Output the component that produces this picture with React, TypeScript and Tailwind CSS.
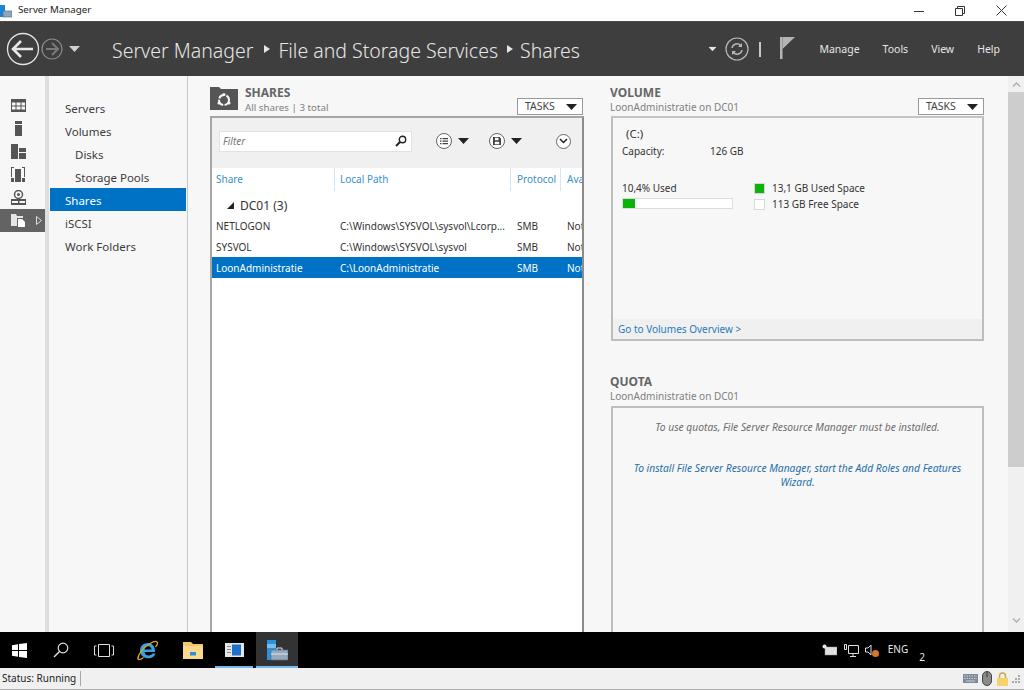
import React from "react";

const font = "font-['Noto_Sans','Open_Sans',sans-serif]";

function Caret({ className = "" }: { className?: string }) {
  return (
    <svg width="11" height="6" viewBox="0 0 11 6" className={className}>
      <path d="M0 0h11L5.500 6z" fill="currentColor" />
    </svg>
  );
}

function TitleBar() {
  return (
    <div className="flex h-[22px] items-center bg-white border-b border-[#4a4a4a]">
      <svg width="14" height="14" viewBox="0 0 14 14" className="-ml-[2px]">
        <rect x="1" y="1" width="6" height="12" fill="#1b86d6" />
        <rect x="5" y="7" width="9" height="6" fill="#8fa5bd" stroke="#4e6780" strokeWidth="0.6" />
      </svg>
      <span className="ml-[6px] text-[9.75px] text-[#222]">Server Manager</span>
      <div className="ml-auto flex items-center gap-[31px] pr-[17px] text-[#333]">
        <svg width="10" height="10" viewBox="0 0 10 10"><path d="M0 5.500h10" stroke="currentColor" /></svg>
        <svg width="10" height="10" viewBox="0 0 10 10" fill="none" stroke="currentColor"><path d="M.5 2.500h7v7h-7zM2.500 2.500v-2h7v7h-2" /></svg>
        <svg width="11" height="11" viewBox="0 0 11 11" stroke="currentColor"><path d="M.5.500l10 10M10.500.500l-10 10" /></svg>
      </div>
    </div>
  );
}

function Header() {
  return (
    <div className="flex h-[54px] items-center bg-[#3e3e3e] text-[#e6e6e6]">
      <svg width="34" height="34" viewBox="0 0 34 34" fill="none" className="ml-[6px]">
        <circle cx="17" cy="17" r="15.500" stroke="#e4e4e4" strokeWidth="1.300" />
        <path d="M7 17h20M15 9l-8 8 8 8" stroke="#e8e8e8" strokeWidth="2.600" />
      </svg>
      <svg width="22" height="22" viewBox="0 0 22 22" fill="none" className="ml-[1px]">
        <circle cx="11" cy="11" r="10" stroke="#8a8a8a" strokeWidth="1.200" />
        <path d="M17 11H5M11 5l6 6-6 6" stroke="#7a7a7a" strokeWidth="2" />
      </svg>
      <Caret className="ml-[6px] text-[#d0d0d0]" />
      <span className="ml-[32px] pt-[3px] text-[19.5px] font-light">Server Manager</span>
      <svg width="6" height="8" viewBox="0 0 6 8" className="ml-[11px] mr-[8px]"><path d="M0 0l6 4-6 4z" fill="#e6e6e6" /></svg>
      <span className="pt-[3px] text-[19.5px] font-light">File and Storage Services</span>
      <svg width="6" height="8" viewBox="0 0 6 8" className="ml-[9px] mr-[7px]"><path d="M0 0l6 4-6 4z" fill="#e6e6e6" /></svg>
      <span className="pt-[3px] text-[19.5px] font-light">Shares</span>
      <div className="ml-auto flex items-center">
        <Caret className="scale-75 text-[#e6e6e6]" />
        <svg width="24" height="24" viewBox="0 0 24 24" fill="none" className="ml-[7px]" stroke="#b8b8b8">
          <circle cx="12" cy="12" r="11" strokeWidth="1.200" />
          <path d="M7 11a5 5 0 0 1 8.700-2.500M17 13a5 5 0 0 1-8.700 2.500" strokeWidth="1.500" />
          <path d="M17 6v4h-4zM7 18v-4h4z" fill="#b8b8b8" stroke="none" />
        </svg>
        <div className="ml-[10px] h-[15px] w-[2px] bg-[#c8c8c8]" />
        <svg width="16" height="22" viewBox="0 0 16 22" className="ml-[19px] -mt-[3px]">
          <rect x="0" y="0" width="2.500" height="22" fill="#b4b4b4" />
          <path d="M2.500 0H15L2.500 12z" fill="#b4b4b4" />
        </svg>
        <div className="ml-[23px] mr-[24px] flex items-center gap-[23px] pt-[1px] text-[10.5px]">
          <span>Manage</span>
          <span>Tools</span>
          <span>View</span>
          <span>Help</span>
        </div>
      </div>
    </div>
  );
}

const railIcon = "#555";

function Rail() {
  return (
    <div className="flex w-[45px] shrink-0 flex-col pt-[18px]">
      {[
        <svg width="15" height="13" viewBox="0 0 15 13" fill={railIcon} key="a">
          <path d="M0 0h15v13H0zM1 3.500v3h3.500v-3zM5.500 3.500v3H9.500v-3zM10.500 3.500v3H14v-3zM1 7.500v3h3.500v-3zM5.500 7.500v3H9.500v-3zM10.500 7.500v3H14v-3z" fillRule="evenodd" />
        </svg>,
        <svg width="7" height="15" viewBox="0 0 7 15" fill={railIcon} key="b">
          <path d="M0 0h7v3H0zM0 4h7v11H0z" />
        </svg>,
        <svg width="15" height="15" viewBox="0 0 15 15" fill={railIcon} key="c">
          <path d="M0 0h7v15H0zM8 4h7v4H8zM8 9h7v6H8z" />
        </svg>,
        <svg width="14" height="15" viewBox="0 0 14 15" fill={railIcon} key="d">
          <path d="M4 2h6v13H4zM0 0h3v1H1v9H0zM11 0h3v10h-1V1h-2z" />
          <rect x="0" y="11" width="3" height="4" />
          <rect x="11" y="11" width="3" height="4" />
        </svg>,
        <svg width="15" height="15" viewBox="0 0 15 15" fill={railIcon} key="e">
          <circle cx="7.500" cy="4.500" r="4" fill="none" stroke={railIcon} strokeWidth="1.500" />
          <circle cx="7.500" cy="4.500" r="1.500" />
          <path d="M0 9h15v6H0zM1 11v2h6v-2zM8.500 11v2H14v-2z" fillRule="evenodd" />
        </svg>,
      ].map((ic, i) => (
        <div key={i} className="flex h-[23px] w-[36px] items-center justify-center">
          {ic}
        </div>
      ))}
      <div className="flex h-[23px] items-center bg-[#636363]">
        <div className="flex w-[36px] justify-center">
          <svg width="15" height="13" viewBox="0 0 15 13">
            <path d="M0 0h5l1 2h6v2H6v8H0z" fill="#e6e6e6" />
            <path d="M7 5h4l3 3v5H7z" fill="#fff" />
          </svg>
        </div>
        <svg width="6" height="9" viewBox="0 0 6 9" fill="none"><path d="M.5.500l5 4-5 4z" stroke="#ddd" /></svg>
      </div>
    </div>
  );
}

function Nav() {
  const items: [string, boolean, boolean][] = [
    ["Servers", false, false],
    ["Volumes", false, false],
    ["Disks", true, false],
    ["Storage Pools", true, false],
    ["Shares", false, true],
    ["iSCSI", false, false],
    ["Work Folders", false, false],
  ];
  return (
    <div className="w-[139px] shrink-0 border-r border-[#c8c8c8] pt-[20px] pl-px pr-[1px]">
      {items.map(([t, sub, sel]) => (
        <div
          key={t}
          className={`flex h-[23px] items-center pt-[2px] text-[11.5px] ${sub ? "pl-[25px]" : "pl-[15px]"} ${sel ? "bg-[#0072c6] text-white" : "text-[#3c3c3c]"}`}
        >
          {t}
        </div>
      ))}
    </div>
  );
}

function Tasks() {
  return (
    <div className="flex h-[17px] w-[66px] items-center border border-[#9a9a9a] bg-white pl-[7px] pr-[5px] text-[10.5px] text-[#444]">
      <span>TASKS</span>
      <Caret className="ml-auto text-[#222]" />
    </div>
  );
}

function SectionHead({ title, sub, subClass, icon, tasksClass = "" }: { title: string; sub: string; subClass: string; icon?: React.ReactNode; tasksClass?: string }) {
  return (
    <div className="flex h-[31px] items-end pb-[1px]">
      {icon}
      <div className="min-w-0 leading-none">
        <div className="text-[12px] font-bold leading-[15px] text-[#666]">{title}</div>
        <div className={`${subClass} leading-[15px] text-[#808080]`}>{sub}</div>
      </div>
      <div className={`ml-auto ${tasksClass}`}><Tasks /></div>
    </div>
  );
}

function CircleBtn({ children }: { children: React.ReactNode }) {
  return (
    <div className="flex h-[16px] w-[16px] items-center justify-center rounded-full border border-[#666] bg-white">
      {children}
    </div>
  );
}

function SharesPanel() {
  const cols = "grid grid-cols-[124px_177px_50px_60px] pl-[4px] text-[10px] whitespace-nowrap";
  const rows = [
    ["NETLOGON", "C:\\Windows\\SYSVOL\\sysvol\\Lcorp...", "SMB", "Not"],
    ["SYSVOL", "C:\\Windows\\SYSVOL\\sysvol", "SMB", "Not"],
    ["LoonAdministratie", "C:\\LoonAdministratie", "SMB", "Not"],
  ];
  return (
    <div className="flex w-[374px] shrink-0 flex-col">
      <SectionHead
        title="SHARES"
        sub="All shares | 3 total"
        subClass="text-[9.75px]"
        tasksClass="mr-[1px]"
        icon={
          <svg width="28" height="23" viewBox="0 0 28 23" className="mr-[7px] mb-[5px]">
            <path d="M0 0h9l2 2h17v21H0z" fill="#555" />
            <circle cx="14" cy="13" r="5" fill="none" stroke="#f7f7f7" strokeWidth="2" strokeDasharray="7 1.500" />
            <circle cx="14" cy="7.500" r="1.500" fill="#f7f7f7" />
            <circle cx="9" cy="16" r="1.500" fill="#f7f7f7" />
            <circle cx="19" cy="16" r="1.500" fill="#f7f7f7" />
          </svg>
        }
      />
      <div className="min-h-0 flex-1 overflow-hidden border-2 border-b-0 border-[#a6a6a6] border-r-[#8c8c8c] bg-white">
        <div className="flex h-[50px] items-center bg-[#f0f0f0] pb-[4px] pl-[7px]">
          <div className="flex h-[21px] w-[193px] items-center border border-[#e2e2e2] bg-white pl-[3px] pr-[4px] text-[10px] italic text-[#777]">
            <span>Filter</span>
            <svg width="12" height="12" viewBox="0 0 12 12" fill="none" className="ml-auto" stroke="#222">
              <circle cx="7.500" cy="4.500" r="3.200" strokeWidth="1.400" />
              <path d="M5 7l-4 4" strokeWidth="2" />
            </svg>
          </div>
          <div className="ml-[24px] flex items-center gap-[6px]">
            <CircleBtn>
              <svg width="8" height="8" viewBox="0 0 8 8" fill="#444"><path d="M0 1h1.500v1.200H0zM2.500 1H8v1.200H2.500zM0 3.500h1.500v1.200H0zM2.500 3.500H8v1.200H2.500zM0 6h1.500v1.200H0zM2.500 6H8v1.200H2.500z" /></svg>
            </CircleBtn>
            <Caret className="text-[#222]" />
          </div>
          <div className="ml-[20px] flex items-center gap-[6px]">
            <CircleBtn>
              <svg width="8" height="8" viewBox="0 0 8 8" fill="#444"><path d="M0 0h6.500L8 1.500V8H0zM2 .8v2.400h3.500V.8zM1.800 4.800V7.300h4.400V4.800z" fillRule="evenodd" /></svg>
            </CircleBtn>
            <Caret className="text-[#222]" />
          </div>
          <div className="ml-[34px]">
            <div className="flex h-[15px] w-[15px] items-center justify-center rounded-full border border-[#666] bg-white">
              <svg width="9" height="6" viewBox="0 0 9 6" fill="none"><path d="M1 1l3.500 3.500L8 1" stroke="#222" strokeWidth="1.500" /></svg>
            </div>
          </div>
        </div>
        <div className={`${cols} h-[22px] items-center pt-[1px] text-[#3a8fc7]`}>
          <span>Share</span>
          <span className="-ml-[6px] -my-[4px] border-l border-[#d4e6f3] py-[4px] pl-[5px]">Local Path</span>
          <span className="-ml-[7px] -my-[4px] border-l border-[#d4e6f3] py-[4px] pl-[6px]">Protocol</span>
          <span className="-ml-[7px] -my-[4px] border-l border-[#d4e6f3] py-[4px] pl-[6px]">Ava</span>
        </div>
        <div className="flex h-[24px] items-center pl-[15px] pt-[7px] text-[12px] text-[#333]">
          <svg width="7" height="7" viewBox="0 0 7 7" className="mr-[6px]"><path d="M7 0v7H0z" fill="#222" /></svg>
          <span>DC01 (3)</span>
        </div>
        {rows.map((r, i) => (
          <div
            key={r[0]}
            className={`${cols} h-[21px] items-center pt-[1px] ${i === 2 ? "bg-[#0072c6] text-white" : "text-[#333]"} ${i === 0 ? "mt-[1px]" : ""}`}
          >
            <span>{r[0]}</span>
            <span>{r[1]}</span>
            <span>{r[2]}</span>
            <span>{r[3]}</span>
          </div>
        ))}
      </div>
    </div>
  );
}

function VolumePanel() {
  return (
    <div className="flex w-[374px] shrink-0 flex-col">
      <SectionHead title="VOLUME" sub="LoonAdministratie on DC01" subClass="text-[10px]" />
      <div className="ml-[1px] flex h-[225px] flex-col border-2 border-[#bdbdbd] border-t-[#c4c4c4] text-[10px] text-[#333]">
        <div className="flex-1 pl-[9px] pt-[8px]">
          <div className="pl-[4px] text-[11.5px] leading-[16px]">(C:)</div>
          <div className="flex pt-[1px] leading-[16px]">
            <span className="w-[88px]">Capacity:</span>
            <span>126 GB</span>
          </div>
          <div className="mt-[21px] flex">
            <div className="w-[133px]">
              <div className="leading-[16px]">10,4% Used</div>
              <div className="mt-[2px] h-[11px] w-[111px] border border-[#dcdcdc] bg-white">
                <div className="h-full w-[12px] bg-[#09b409]" />
              </div>
            </div>
            <div className="flex flex-col">
              <div className="flex h-[16px] items-center">
                <div className="h-[9px] w-[9px] bg-[#09b409] outline outline-1 outline-[#d8d8d8]" />
                <span className="ml-[8px]">13,1 GB Used Space</span>
              </div>
              <div className="flex h-[17px] items-center">
                <div className="h-[9px] w-[9px] bg-white outline outline-1 outline-[#d8d8d8]" />
                <span className="ml-[8px]">113 GB Free Space</span>
              </div>
            </div>
          </div>
        </div>
        <div className="flex h-[20px] items-center bg-[#f0f0f0] pl-[5px] text-[#2a7cb8]">Go to Volumes Overview &gt;</div>
      </div>
      <div className="mt-[33px] text-[12px] font-bold leading-[15px] text-[#666]">QUOTA</div>
      <div className="text-[10px] leading-[15px] text-[#808080]">LoonAdministratie on DC01</div>
      <div className="ml-[1px] mt-[2px] min-h-0 flex-1 border-2 border-b-0 border-[#bdbdbd] pt-[12px] text-center text-[10.25px] italic leading-[14px]">
        <div className="text-[#6e6e6e]">To use quotas, File Server Resource Manager must be installed.</div>
        <div className="mx-auto mt-[27px] w-[350px] text-[#1f6fa8]">
          To install File Server Resource Manager, start the Add Roles and Features Wizard.
        </div>
      </div>
    </div>
  );
}

function Scrollbar() {
  return (
    <div className="flex w-[16px] shrink-0 flex-col bg-[#f0f0f0]">
      <div className="flex h-[16px] items-center justify-center">
        <svg width="9" height="5" viewBox="0 0 9 5" fill="none"><path d="M1 4.500l3.500-3.500L8 4.500" stroke="#b0b0b0" strokeWidth="1.500" /></svg>
      </div>
      <div className="h-[375px] bg-[#cdcdcd]" />
      <div className="mt-auto flex h-[14px] items-start justify-center">
        <svg width="9" height="5" viewBox="0 0 9 5" fill="none"><path d="M1 .500L4.500 4 8 .500" stroke="#b0b0b0" strokeWidth="1.500" /></svg>
      </div>
    </div>
  );
}

function Content() {
  return (
    <div className="flex h-[556px] bg-[#f7f7f7]">
      <Rail />
      <div className="w-[4px] shrink-0 bg-[#dedede]" />
      <Nav />
      <div className="flex min-w-0 flex-1 pl-[22px] pr-[24px] pt-[9px]">
        <SharesPanel />
        <div className="w-[26px] shrink-0" />
        <VolumePanel />
      </div>
      <Scrollbar />
    </div>
  );
}

function Taskbar() {
  return (
    <div className="flex h-[36px] items-center bg-black text-[#e8e8e8]">
      <div className="flex h-full w-[38px] items-center justify-center pl-[1px]">
        <svg width="15" height="15" viewBox="0 0 15 15" fill="#fff"><path d="M0 2.200l6-.9v5.800H0zM7 1.100L15 0v7.100H7zM0 8h6v5.700l-6-.9zM7 8h8v7l-8-1.100z" /></svg>
      </div>
      <div className="flex h-full w-[46px] items-center justify-center">
        <svg width="16" height="16" viewBox="0 0 16 16" fill="none" stroke="#e0e0e0"><circle cx="10" cy="6" r="4.800" strokeWidth="1.200" /><path d="M6.500 9.500L1 15" strokeWidth="1.400" /></svg>
      </div>
      <div className="flex h-full w-[40px] items-center justify-center">
        <svg width="20" height="13" viewBox="0 0 20 13" fill="none" stroke="#e0e0e0"><path d="M4.500.500h11v12h-11zM2.500 2H.500v9h2M17.500 2h2v9h-2" /></svg>
      </div>
      <div className="flex h-full w-[47px] items-center justify-center">
        <svg width="22" height="21" viewBox="0 0 22 21" fill="none">
          <path d="M3 10.500C3 6 6.500 3 11 3c4 0 7 3 7 8v1H7.500c.3 2.500 2 3.500 4 3.500 1.800 0 3.200-.8 4-2h3.200c-1.200 3-3.800 4.700-7.200 4.700C6.500 18.200 3 15 3 10.500zM7.600 9.500h7c-.2-2-1.600-3.300-3.500-3.300s-3.200 1.300-3.500 3.300z" fill="#3aa2e0" />
          <path d="M1.500 18.500C.5 16 5 8 13 3.500c3-1.700 6-2.500 7-1.500 1 1-.2 3.500-1.500 5M3 13c-2 3.500-2.800 6-1.500 6.500 1 .4 3-.5 5-2" stroke="#e8a318" strokeWidth="1.300" />
        </svg>
      </div>
      <div className="flex h-full w-[43px] items-center justify-center">
        <svg width="20" height="17" viewBox="0 0 20 17">
          <path d="M0 0h8l2 2h10v15H0z" fill="#f2c86e" />
          <path d="M0 4h20v13H0z" fill="#fbd98b" />
          <path d="M7 10h6v3.500H7z" fill="#2c8fd8" />
        </svg>
      </div>
      <div className="relative flex h-full w-[40px] items-center justify-center">
        <svg width="19" height="14" viewBox="0 0 19 14">
          <rect width="19" height="14" fill="#e6e6e6" />
          <rect x="7" y="1.500" width="9" height="11" fill="#1f70c9" />
          <path d="M2 3h4v1H2zM2 6h4v1H2zM2 9h4v1H2z" fill="#8a8a8a" />
        </svg>
        <div className="absolute inset-x-[1px] bottom-0 h-[2px] bg-[#76b9ed]" />
      </div>
      <div className="relative ml-[2px] flex h-full w-[42px] items-center justify-center bg-[#333]">
        <svg width="22" height="21" viewBox="0 0 22 21">
          <rect x="1" y="0" width="9" height="20" fill="#2a93e0" />
          <path d="M1 5h9M1 7h9" stroke="#cbe6fa" />
          <rect x="5" y="10" width="17" height="10" fill="#96a9be" stroke="#5b7088" strokeWidth="0.700" />
          <path d="M11 10V8h5v2M5 14h17" stroke="#dfe6ee" fill="none" />
        </svg>
        <div className="absolute inset-x-0 bottom-0 h-[2px] bg-[#76b9ed]" />
      </div>
      <div className="ml-auto flex items-center pr-[99px]">
        <svg width="15" height="12" viewBox="0 0 15 12">
          <rect x="3" y="3" width="12" height="8" fill="#e0e0e0" stroke="#999" strokeWidth="0.500" />
          <circle cx="2.500" cy="2.500" r="2" fill="#e8e8e8" />
        </svg>
        <svg width="15" height="13" viewBox="0 0 15 13" fill="none" stroke="#e0e0e0" className="ml-[7px]">
          <path d="M4.500 1.500h10v8h-10zM9 9.500v3M6 12.500h6M.500 .500h2v5h-2z" />
        </svg>
        <div className="relative ml-[6px]">
          <svg width="14" height="12" viewBox="0 0 14 12" fill="none" stroke="#e0e0e0"><path d="M.500 4h2.500l3-3v10l-3-3H.500z" /></svg>
          <div className="absolute -bottom-[1px] left-[7px] h-[7px] w-[7px] rounded-full bg-[#d9722a]" />
        </div>
        <span className="ml-[9px] text-[10px] -mt-[1px]">ENG</span>
        <span className="ml-[11px] mt-[15px] text-[10px]">2</span>
      </div>
    </div>
  );
}

function StatusBar() {
  return (
    <div className="flex h-[22px] items-center bg-[#f0f0f0] border-b border-[#b0b0b0] text-[10px] text-[#222]">
      <span className="pl-[2px]">Status: Running</span>
      <div className="ml-[4px] h-[15px] w-px bg-[#a8a8a8]" />
      <div className="ml-auto flex items-center pr-[3px]">
        <svg width="15" height="9" viewBox="0 0 15 9"><rect width="15" height="9" fill="#7d8a97" /><path d="M1 2h13M1 4.500h13" stroke="#c8d0d8" strokeDasharray="1.500 1" /><path d="M3 7h9" stroke="#c8d0d8" /></svg>
        <svg width="10" height="15" viewBox="0 0 10 15" className="ml-[4px]"><rect x=".500" y=".500" width="9" height="14" rx="4.500" fill="#8a8a8a" stroke="#444" /><path d="M5 1v5" stroke="#333" /></svg>
        <svg width="11" height="14" viewBox="0 0 11 14" fill="none" className="ml-[5px]"><path d="M2.500 6V4a3 3 0 0 1 6 0v2" stroke="#caa94f" strokeWidth="1.500" /><rect y="6" width="11" height="8" fill="#f4d36b" /></svg>
        <svg width="10" height="10" viewBox="0 0 10 10" fill="#aaa" className="ml-[3px]"><path d="M7 1h2v2H7zM4 4h2v2H4zM7 4h2v2H7zM1 7h2v2H1zM4 7h2v2H4zM7 7h2v2H7z" /></svg>
      </div>
    </div>
  );
}

export default function App() {
  return (
    <div className={`flex h-[690px] w-[1024px] flex-col overflow-hidden bg-white ${font}`}>
      <TitleBar />
      <Header />
      <Content />
      <Taskbar />
      <StatusBar />
    </div>
  );
}
